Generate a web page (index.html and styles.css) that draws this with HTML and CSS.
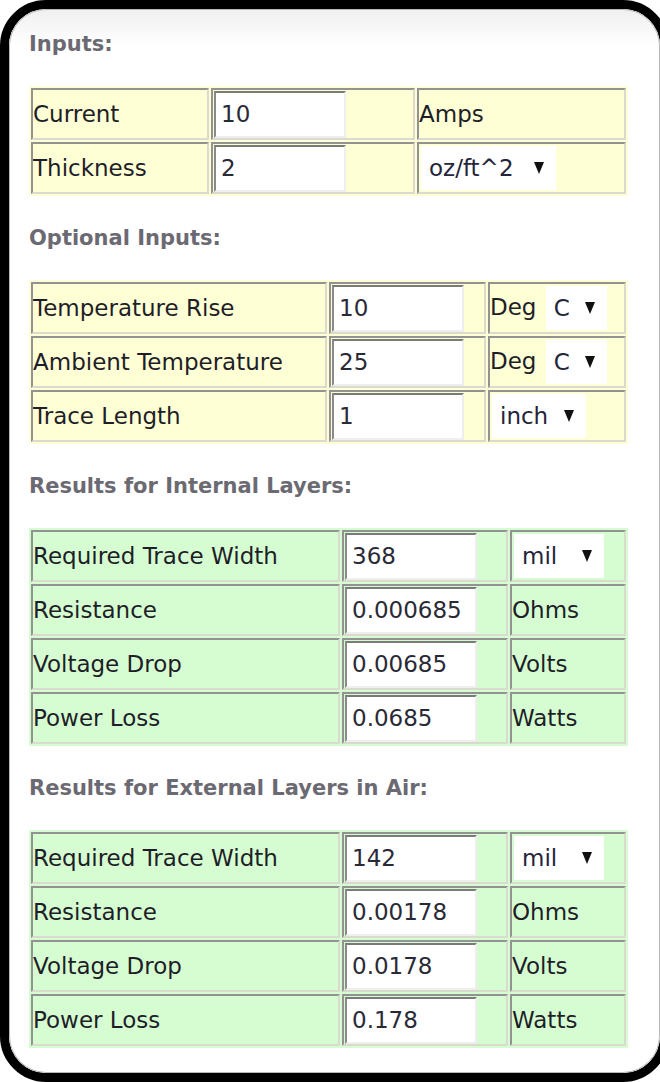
FILE: index.html
```html
<!DOCTYPE html>
<html>
<head>
    <title>Trace Width Calculator</title>
    <meta name="viewport" content="width=device-width, initial-scale=1">
    <link rel="stylesheet" href="styles.css">
</head>
<body>
    <div class="window">
    <div class="frame">
        <div class="panel">
            <h3>Inputs:</h3>
            <table class="calc yellow">
                <colgroup><col class="a1"><col class="a2"><col class="a3"></colgroup>
                <tr>
                    <td>Current</td>
                    <td><input type="text" value="10"></td>
                    <td>Amps</td>
                </tr>
                <tr>
                    <td>Thickness</td>
                    <td><input type="text" value="2"></td>
                    <td><span class="pick"><select class="w-oz"><option>oz/ft^2</option><option>mil</option><option>mm</option></select></span></td>
                </tr>
            </table>

            <h3>Optional Inputs:</h3>
            <table class="calc yellow">
                <colgroup><col class="b1"><col class="b2"><col class="b3"></colgroup>
                <tr>
                    <td>Temperature Rise</td>
                    <td><input type="text" value="10"></td>
                    <td>Deg <span class="pick"><select class="w-c"><option>C</option><option>F</option></select></span></td>
                </tr>
                <tr>
                    <td>Ambient Temperature</td>
                    <td><input type="text" value="25"></td>
                    <td>Deg <span class="pick"><select class="w-c"><option>C</option><option>F</option></select></span></td>
                </tr>
                <tr>
                    <td>Trace Length</td>
                    <td><input type="text" value="1"></td>
                    <td><span class="pick"><select class="w-inch"><option>inch</option><option>mil</option><option>mm</option><option>cm</option></select></span></td>
                </tr>
            </table>

            <h3>Results for Internal Layers:</h3>
            <table class="calc green">
                <colgroup><col class="c1"><col class="c2"><col class="c3"></colgroup>
                <tr>
                    <td>Required Trace Width</td>
                    <td><input type="text" value="368"></td>
                    <td><span class="pick"><select class="w-mil"><option>mil</option><option>mm</option><option>um</option></select></span></td>
                </tr>
                <tr>
                    <td>Resistance</td>
                    <td><input type="text" value="0.000685"></td>
                    <td>Ohms</td>
                </tr>
                <tr>
                    <td>Voltage Drop</td>
                    <td><input type="text" value="0.00685"></td>
                    <td>Volts</td>
                </tr>
                <tr>
                    <td>Power Loss</td>
                    <td><input type="text" value="0.0685"></td>
                    <td>Watts</td>
                </tr>
            </table>

            <h3>Results for External Layers in Air:</h3>
            <table class="calc green">
                <colgroup><col class="c1"><col class="c2"><col class="c3"></colgroup>
                <tr>
                    <td>Required Trace Width</td>
                    <td><input type="text" value="142"></td>
                    <td><span class="pick"><select class="w-mil"><option>mil</option><option>mm</option><option>um</option></select></span></td>
                </tr>
                <tr>
                    <td>Resistance</td>
                    <td><input type="text" value="0.00178"></td>
                    <td>Ohms</td>
                </tr>
                <tr>
                    <td>Voltage Drop</td>
                    <td><input type="text" value="0.0178"></td>
                    <td>Volts</td>
                </tr>
                <tr>
                    <td>Power Loss</td>
                    <td><input type="text" value="0.178"></td>
                    <td>Watts</td>
                </tr>
            </table>
        </div>
    </div>
    </div>
</body>
</html>
```

FILE: styles.css
```css
html, body {
    margin: 0;
    padding: 0;
    overflow: hidden;
    background: #fff;
}
body {
    font-family: "DejaVu Sans", Verdana, sans-serif;
    color: #1e1e28;
}
/* the screenshot cuts the frame off on the right */
.window {
    width: 660px;
    height: 1082px;
    overflow: hidden;
}
.frame {
    width: 669px;
    min-width: 669px;
    height: 1082px;
    box-sizing: border-box;
    border: 9px solid #000;
    border-radius: 46px;
    overflow: hidden;
}
.panel {
    height: 100%;
    box-sizing: border-box;
    padding: 23px 0 0 20px;
    border-radius: 37px;
    box-shadow: inset 0 0 0 1px #b8b8b8;
    background: linear-gradient(#efefef, #fff 36px);
}
h3 {
    margin: 0 0 30px 0;
    font-size: 21px;
    line-height: 24px;
    font-weight: bold;
    color: #6b6a72;
}
.calc {
    width: 599px;
    table-layout: fixed;
    border-collapse: separate;
    border-spacing: 2px;
    margin-bottom: 30px;
    font-size: 23px;
}
.yellow {
    background: #ffffd6;
}
.green {
    background: #d6fdd2;
}
.calc td {
    height: 48px;
    padding: 0;
    border: 2px solid;
    border-color: #929292 #dadacd #dadacd #929292;
    vertical-align: middle;
    white-space: nowrap;
    overflow: hidden;
}
.a1 { width: 178px; }
.a2 { width: 204px; }
.a3 { width: 209px; }
.b1 { width: 296px; }
.b2 { width: 157px; }
.b3 { width: 138px; }
.c1 { width: 309px; }
.c2 { width: 166px; }
.c3 { width: 116px; }
.calc input {
    display: block;
    box-sizing: border-box;
    width: 132px;
    height: 47px;
    margin: 0 0 0 1px;
    padding: 0 0 0 5px;
    border: 2px solid;
    border-color: #7a7a7a #eeeeee #eeeeee #8a8a8a;
    background: #fff;
    font-family: "DejaVu Sans", Verdana, sans-serif;
    font-size: 23px;
    color: #2a2a36;
    outline: none;
}
.pick {
    position: relative;
    display: inline-block;
    vertical-align: middle;
    margin-left: 2px;
}
.pick::after {
    content: "";
    position: absolute;
    right: 12px;
    top: 50%;
    margin-top: -6px;
    border-left: 5px solid transparent;
    border-right: 5px solid transparent;
    border-top: 12px solid #111;
    pointer-events: none;
}
.pick select {
    -webkit-appearance: none;
    appearance: none;
    display: block;
    height: 44px;
    margin: 0;
    padding: 0 0 0 8px;
    border: none;
    border-radius: 0;
    background: #fff;
    font-family: "DejaVu Sans", Verdana, sans-serif;
    font-size: 23px;
    color: #24243a;
}
.w-oz { width: 135px; }
.w-c { width: 61px; }
.w-inch { width: 94px; }
.w-mil { width: 90px; }
```
